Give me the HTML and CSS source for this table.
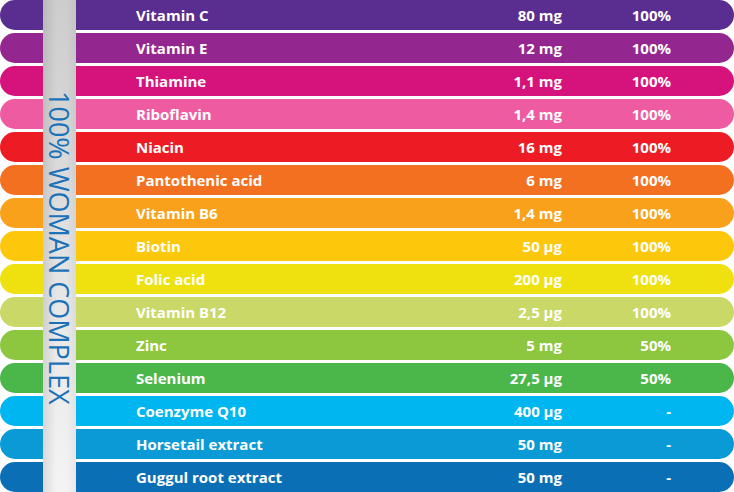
FILE: index.html
```html
<!DOCTYPE html>
<html lang="en">
<head>
<meta charset="utf-8">
<title>100% Woman Complex</title>
<link rel="stylesheet" href="styles.css">
</head>
<body>
<div class="table">
  <div class="band"><span class="band-text">100% WOMAN COMPLEX</span></div>
  <div class="row c1" style="grid-row:1"><span class="name">Vitamin C</span><span class="amt">80 mg</span><span class="pct">100%</span></div>
  <div class="row c2" style="grid-row:2"><span class="name">Vitamin E</span><span class="amt">12 mg</span><span class="pct">100%</span></div>
  <div class="row c3" style="grid-row:3"><span class="name">Thiamine</span><span class="amt">1,1 mg</span><span class="pct">100%</span></div>
  <div class="row c4" style="grid-row:4"><span class="name">Riboflavin</span><span class="amt">1,4 mg</span><span class="pct">100%</span></div>
  <div class="row c5" style="grid-row:5"><span class="name">Niacin</span><span class="amt">16 mg</span><span class="pct">100%</span></div>
  <div class="row c6" style="grid-row:6"><span class="name">Pantothenic acid</span><span class="amt">6 mg</span><span class="pct">100%</span></div>
  <div class="row c7" style="grid-row:7"><span class="name">Vitamin B6</span><span class="amt">1,4 mg</span><span class="pct">100%</span></div>
  <div class="row c8" style="grid-row:8"><span class="name">Biotin</span><span class="amt">50 µg</span><span class="pct">100%</span></div>
  <div class="row c9" style="grid-row:9"><span class="name">Folic acid</span><span class="amt">200 µg</span><span class="pct">100%</span></div>
  <div class="row c10" style="grid-row:10"><span class="name">Vitamin B12</span><span class="amt">2,5 µg</span><span class="pct">100%</span></div>
  <div class="row c11" style="grid-row:11"><span class="name">Zinc</span><span class="amt">5 mg</span><span class="pct">50%</span></div>
  <div class="row c12" style="grid-row:12"><span class="name">Selenium</span><span class="amt">27,5 µg</span><span class="pct">50%</span></div>
  <div class="row c13" style="grid-row:13"><span class="name">Coenzyme Q10</span><span class="amt">400 µg</span><span class="pct">-</span></div>
  <div class="row c14" style="grid-row:14"><span class="name">Horsetail extract</span><span class="amt">50 mg</span><span class="pct">-</span></div>
  <div class="row c15" style="grid-row:15"><span class="name">Guggul root extract</span><span class="amt">50 mg</span><span class="pct">-</span></div>
</div>
</body>
</html>
```
FILE: styles.css
```css
html, body {
  margin: 0;
  padding: 0;
  background: #ffffff;
}

.table {
  display: grid;
  grid-template-columns: 43px 33px 1fr;
  grid-template-rows: repeat(15, 30px);
  row-gap: 3px;
  width: 734px;
  font-family: "Open Sans", "Liberation Sans", sans-serif;
}

.row {
  grid-column: 1 / -1;
  display: grid;
  grid-template-columns: 1fr 100px 109px;
  align-items: center;
  padding: 0 63px 0 136px;
  border-radius: 15px;
  color: #ffffff;
  font-size: 15px;
  font-weight: 700;
  line-height: 30px;
  white-space: nowrap;
}

.amt, .pct {
  text-align: right;
}

.band {
  grid-column: 2;
  grid-row: 1 / -1;
  z-index: 1;
  display: flex;
  align-items: center;
  justify-content: center;
  background:
    linear-gradient(90deg, rgba(0,0,0,0.10) 0%, rgba(0,0,0,0) 40%, rgba(0,0,0,0) 70%, rgba(0,0,0,0.05) 100%),
    linear-gradient(180deg, #cdcdcd 0%, #d6d6d6 25%, #e6e6e6 60%, #f4f4f4 100%);
}

.band-text {
  writing-mode: vertical-rl;
  font-family: "Open Sans", "Liberation Sans", sans-serif;
  font-size: 27px;
  font-weight: 400;
  color: #1c72b8;
  white-space: nowrap;
  line-height: 1;
  margin-top: 4px;
}

.c1 { background: #5a2d90; }
.c2 { background: #93268f; }
.c3 { background: #d6137d; }
.c4 { background: #ef5ba1; }
.c5 { background: #ed1c24; }
.c6 { background: #f37021; }
.c7 { background: #f9a11b; }
.c8 { background: #fdc70c; }
.c9 { background: #eee10f; }
.c10 { background: #c9d867; }
.c11 { background: #8dc63f; }
.c12 { background: #4bb74a; }
.c13 { background: #00b6f0; }
.c14 { background: #0a9bd6; }
.c15 { background: #0b6fb6; }
```
